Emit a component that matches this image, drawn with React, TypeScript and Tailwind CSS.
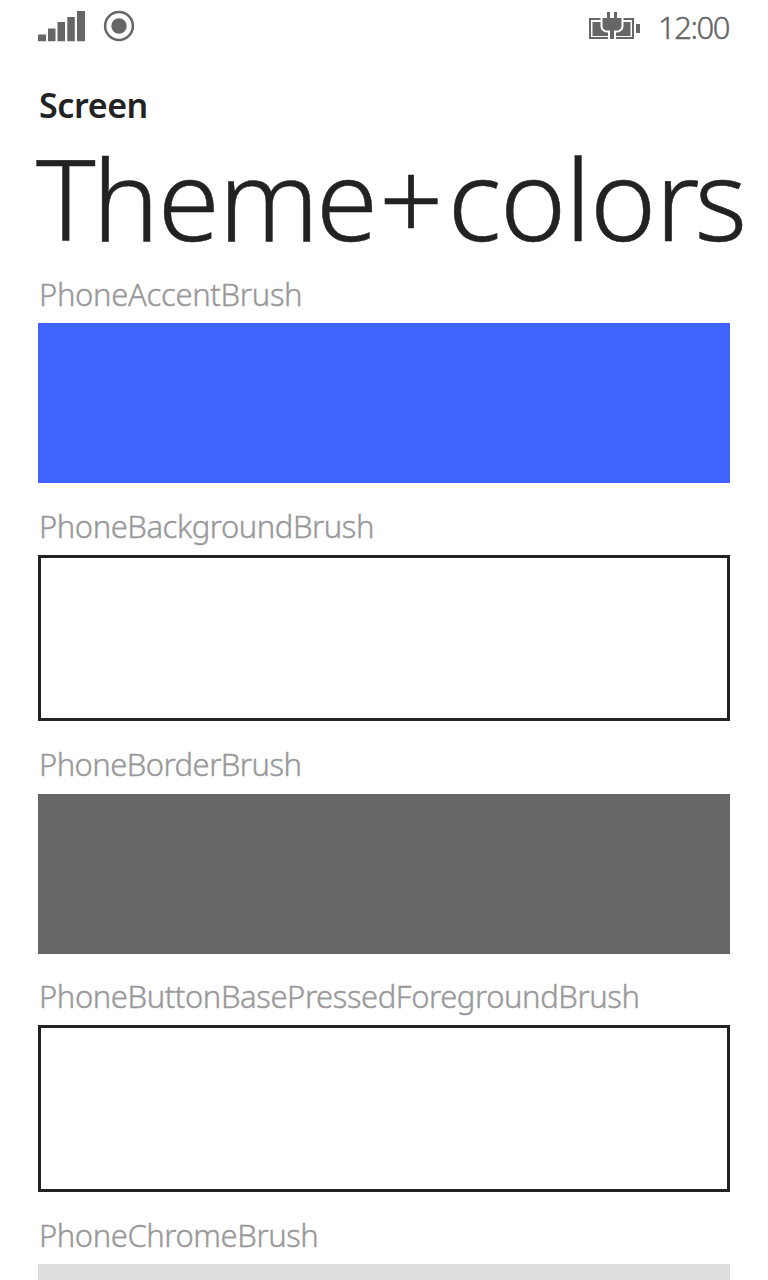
const swatches = [
  { name: "PhoneAccentBrush", label: "h-[66px] pb-[8px] tracking-[-0.32px]", box: "h-[160px] bg-[#3e65ff]" },
  { name: "PhoneBackgroundBrush", label: "h-[72px] pb-[8px] tracking-[-0.46px]", box: "h-[166px] border-[3px] border-[#222222]" },
  { name: "PhoneBorderBrush", label: "h-[73px] pb-[9px] tracking-[-0.56px]", box: "h-[160px] bg-[#666666]" },
  { name: "PhoneButtonBasePressedForegroundBrush", label: "h-[71px] pb-[8px] tracking-[-0.42px]", box: "h-[167px] border-[3px] border-[#222222]" },
  { name: "PhoneChromeBrush", label: "h-[72px] pb-[8px] tracking-[-0.44px]", box: "h-[160px] bg-[#dddddd]" },
];

function SignalIcon() {
  return (
    <svg className="block" width="48" height="32" viewBox="0 0 48 32" fill="#666666">
      <path d="M0 24.500h8V31.300H0zM10 18.500h7.500V31.300H10zM19.500 12h7.500v19.300h-7.500zM29.300 7h7.500v24.300h-7.500zM39 1h8v30.300h-8z" />
    </svg>
  );
}

function LocationIcon() {
  return (
    <svg className="block" width="32" height="32" viewBox="0 0 32 32">
      <circle cx="16" cy="16" r="13.9" fill="none" stroke="#666666" strokeWidth="2.500" />
      <circle cx="16" cy="16" r="7.700" fill="#666666" />
    </svg>
  );
}

function BatteryIcon() {
  const plug = "M19 2h3v6h4V2h3v6h4.500v8c0 2.500-1.800 4.500-4.500 4.500h-3V29h-4v-8.500h-3c-2.700 0-4.500-2-4.500-4.500V8H19z";
  return (
    <svg className="block" width="52" height="32" viewBox="0 0 52 32">
      <path d="M2 9h43v19H2z" fill="none" stroke="#666666" strokeWidth="2" />
      <path d="M4.500 12h38v14h-38zM48 14h4v9h-4z" fill="#666666" />
      <path d={plug} fill="#ffffff" stroke="#ffffff" strokeWidth="4" />
      <path d={plug} fill="#666666" />
    </svg>
  );
}

export default function App() {
  return (
    <div className="flex h-[1280px] w-[768px] flex-col overflow-hidden bg-white font-['Noto_Sans',sans-serif]">
      <header className="flex h-[52px] shrink-0 items-start px-[38px] pt-[10px]">
        <SignalIcon />
        <div className="ml-[17px]">
          <LocationIcon />
        </div>
        <div className="ml-auto">
          <BatteryIcon />
        </div>
        <time className="ml-[18px] w-[72px] text-[31px] leading-[34px] font-light tracking-[-1.5px] text-[#666666] [-webkit-text-stroke:0.4px_#666666]">
          12:00
        </time>
      </header>
      <div className="h-[87px] shrink-0 pt-[32px] pl-[39px] text-[34px] leading-[42px] font-semibold tracking-[-0.4px] text-[#222222]">
        Screen
      </div>
      <h1 className="h-[118px] shrink-0 pl-[36px] text-[112.5px] leading-[118px] font-light tracking-[-1.5px] whitespace-nowrap text-[#222222] [-webkit-text-stroke:0.5px_#222222]">
        <span className="tracking-[-3.5px]">T</span>he<span className="tracking-[-3px]">m</span>
        <span className="tracking-[1px]">e</span>
        <span className="tracking-[4.5px]">+</span>c<span className="tracking-[-1.2px]">olo</span>
        <span className="tracking-[-5px]">r</span>s
      </h1>
      <main className="flex flex-col px-[38px]">
        {swatches.map((s) => (
          <section key={s.name} className="shrink-0">
            <div
              className={`${s.label} flex items-end pl-px text-[31px] leading-[42px] font-light text-[#999999] [-webkit-text-stroke:0.4px_#999999]`}
            >
              {s.name}
            </div>
            <div className={s.box} />
          </section>
        ))}
      </main>
    </div>
  );
}
